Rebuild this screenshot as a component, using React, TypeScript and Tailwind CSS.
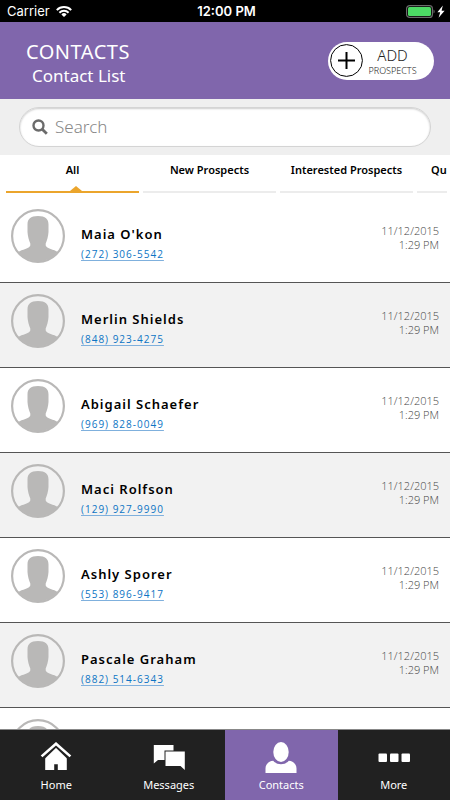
import React from "react";

const contacts = [
  { name: "Maia O'kon", phone: "(272) 306-5542" },
  { name: "Merlin Shields", phone: "(848) 923-4275" },
  { name: "Abigail Schaefer", phone: "(969) 828-0049" },
  { name: "Maci Rolfson", phone: "(129) 927-9990" },
  { name: "Ashly Sporer", phone: "(553) 896-9417" },
  { name: "Pascale Graham", phone: "(882) 514-6343" },
];

const tabs = ["All", "New Prospects", "Interested Prospects"];

function StatusBar() {
  return (
    <div className="grid h-[22px] shrink-0 grid-cols-3 items-center bg-black pr-1 pl-[7px] font-['Inter',sans-serif] text-[13px] leading-[22px] text-white">
      <div className="flex items-center gap-1.5">
        <span>Carrier</span>
        <svg className="h-[11px] w-4" viewBox="0 0 16 11" fill="none" stroke="white" strokeWidth="2" aria-hidden="true">
          <path d="M0.8 4.1a10.2 10.2 0 0 1 14.4 0" />
          <path d="M3.4 6.7a6.5 6.5 0 0 1 9.2 0" />
          <path d="M8 11 5.4 8.4a3.7 3.7 0 0 1 5.2 0z" fill="white" stroke="none" />
        </svg>
      </div>
      <span className="text-center font-semibold">12:00 PM</span>
      <svg className="h-[13px] w-[40px] justify-self-end" viewBox="0 0 40 13" aria-hidden="true">
        <rect x="0.6" y="0.6" width="25.8" height="11.8" rx="3" fill="none" stroke="#6b6b6b" strokeWidth="1.2" />
        <rect x="2" y="2" width="23" height="9" rx="1.5" fill="#4cd964" />
        <path d="M27.5 4.5c1.6.5 1.6 3.5 0 4z" fill="#6b6b6b" />
        <path d="M36.800 0.500 31.400 7.200h2.800l-1.600 5.600L38.600 5.700h-3z" fill="white" />
      </svg>
    </div>
  );
}

function Avatar() {
  return (
    <svg className="size-[54px] shrink-0" viewBox="0 0 54 54" aria-hidden="true">
      <circle cx="27" cy="27" r="25.900" fill="none" stroke="#b9b8b7" strokeWidth="2.200" />
      <path
        d="M27 7C19.500 7 16.500 10 16.500 15.500V23C16.700 27 18 31.500 19.300 34.500V36.500C18.500 39.500 11 40.500 7 43A26 26 0 0 0 47 43C43 40.500 35.500 39.500 34.700 36.500V34.500C36 31.500 37.300 27 37.500 23V15.500C37.500 10 34.500 7 27 7Z"
        fill="#b9b8b7"
      />
    </svg>
  );
}

function ContactRow({ name, phone }: { name: string; phone: string }) {
  return (
    <li className="flex h-[85px] items-start border-b border-[#555] bg-white px-[11px] pt-[11px] even:bg-[#f2f2f2]">
      <Avatar />
      <div className="ml-4 flex-1 pt-[15px]">
        <div className="font-['Noto_Sans',sans-serif] text-[13px] leading-[21px] font-semibold tracking-[1px] text-black">{name}</div>
        <a href={"tel:" + phone} className="block w-fit text-[10px] leading-[19px] tracking-widest text-[#0c74c4] underline decoration-[#7fb0dd] underline-offset-2">
          {phone}
        </a>
      </div>
      <div className="pt-[15px] text-right text-[11px] leading-[14px] font-light text-[#444]">
        <div>11/12/2015</div>
        <div>1:29 PM</div>
      </div>
    </li>
  );
}

function HomeIcon() {
  return (
    <svg className="h-8 w-[32px]" viewBox="0 0 32 32" aria-hidden="true">
      <path d="M16 4 5.200 14V28H14.200V22.300H17.800V28H26.800V14z" fill="white" />
      <path d="M2 17 16 3.600 30 17" fill="none" stroke="#212121" strokeWidth="3.400" />
      <path d="M1.600 14.400 16 1.700 30.400 14.400" fill="none" stroke="white" strokeWidth="2.600" />
    </svg>
  );
}

function MessagesIcon() {
  return (
    <svg className="h-8 w-[32px]" viewBox="0 0 32 32" fill="white" aria-hidden="true">
      <path d="M0.800 3H20.500V8.500H11.500V18H5L0.800 21.500z" />
      <path d="M12.500 9.500H31.800V28L27.500 24H12.500z" />
    </svg>
  );
}

function PersonIcon() {
  return (
    <svg className="h-8 w-[32px]" viewBox="0 0 32 32" fill="white" aria-hidden="true">
      <ellipse cx="16" cy="10" rx="7.700" ry="10" />
      <path d="M8.200 18.800C10 21 13 22.200 16 22.200s6-1.200 7.800-3.400c4.600.4 7.700 3.500 7.700 7.700V31H0.500v-4.500c0-4.200 3.100-7.300 7.700-7.700z" />
    </svg>
  );
}

function MoreIcon() {
  return (
    <svg className="h-8 w-[32px]" viewBox="0 0 32 32" fill="white" aria-hidden="true">
      <rect x="0.500" y="11.500" width="8.500" height="8.500" rx="1" />
      <rect x="12" y="11.500" width="8.500" height="8.500" rx="1" />
      <rect x="23.500" y="11.500" width="8.500" height="8.500" rx="1" />
    </svg>
  );
}

const navItems = [
  { label: "Home", icon: <HomeIcon /> },
  { label: "Messages", icon: <MessagesIcon /> },
  { label: "Contacts", icon: <PersonIcon />, active: true },
  { label: "More", icon: <MoreIcon /> },
];

export default function App() {
  return (
    <div className="flex h-screen flex-col overflow-hidden bg-white font-['Open_Sans',sans-serif]">
      <StatusBar />

      <header className="flex h-[77px] shrink-0 items-center justify-between bg-[#8066ac] pr-4 pl-[26px] text-white">
        <div className="pt-[6px] font-['Noto_Sans',sans-serif]">
          <h1 className="text-[20px] leading-6 tracking-wide">CONTACTS</h1>
          <p className="pl-[6px] text-[17px] leading-6">Contact List</p>
        </div>
        <button type="button" className="flex h-[38px] w-[106px] items-center rounded-full bg-white pl-0.5 text-[#222]">
          <svg className="size-[33px] shrink-0" viewBox="0 0 33 33" fill="none" stroke="black" aria-hidden="true">
            <circle cx="16.500" cy="16.500" r="15.900" strokeWidth="1" />
            <path d="M16.500 8v17M8 16.500h17" strokeWidth="2" />
          </svg>
          <span className="flex flex-1 flex-col items-center pr-3 font-['Noto_Sans',sans-serif] font-light">
            <span className="text-[15px] leading-5">ADD</span>
            <span className="text-[9px] leading-[11px]">PROSPECTS</span>
          </span>
        </button>
      </header>

      <div className="shrink-0 bg-[#efefef] px-[19px] py-2">
        <label className="flex h-10 items-center gap-[7px] rounded-full border border-[#d4d4d4] bg-white px-3 shadow-[inset_0_1px_2px_#ccc]">
          <svg className="size-4 shrink-0" viewBox="0 0 16 16" fill="none" stroke="#6b6b6b" aria-hidden="true">
            <circle cx="6.500" cy="6.500" r="5" strokeWidth="2.400" />
            <path d="m10 10 4.800 4.800" strokeWidth="2.800" />
          </svg>
          <input
            type="search"
            aria-label="Search"
            placeholder="Search"
            className="min-w-0 flex-1 bg-transparent font-['Noto_Sans',sans-serif] text-[17px] leading-6 font-light outline-none placeholder:text-[#888]"
          />
        </label>
      </div>

      <nav className="mr-[3px] flex shrink-0 gap-1 overflow-hidden pb-[5px] pl-[6px] font-['Noto_Sans',sans-serif] text-[11px] leading-4 font-semibold whitespace-nowrap text-black">
        {tabs.map((tab, i) => (
          <button
            key={tab}
            type="button"
            className={
              i === 0
                ? "relative h-[38px] w-[133px] shrink-0 border-b-2 border-[#eba52c] pb-1.5"
                : "h-[38px] w-[133px] shrink-0 border-b-2 border-[#ececec] pb-1.5"
            }
          >
            {tab}
            {i === 0 && (
              <svg className="absolute bottom-0 left-16 h-[5px] w-3" viewBox="0 0 12 5" aria-hidden="true">
                <path d="M0 5 6 0l6 5z" fill="#eba52c" />
              </svg>
            )}
          </button>
        ))}
        <button type="button" className="h-[38px] w-[133px] shrink-0 border-b-2 border-[#ececec] pb-1.5 pl-[14px] text-left">
          Qu
        </button>
      </nav>

      <ul className="min-h-0 flex-1 overflow-hidden">
        {contacts.map((c) => (
          <ContactRow key={c.phone} name={c.name} phone={c.phone} />
        ))}
        <li className="flex h-[85px] px-[11px] pt-[11px]">
          <Avatar />
        </li>
      </ul>

      <nav className="grid h-[71px] shrink-0 grid-cols-4 border-t border-[#888] bg-[#212121] font-['Noto_Sans',sans-serif] text-[11px] leading-4 text-white">
        {navItems.map((item) => (
          <a
            key={item.label}
            href={"#" + item.label}
            className={
              item.active
                ? "flex flex-col items-center gap-[3px] bg-[#8066ac] pt-3"
                : "flex flex-col items-center gap-[3px] pt-3"
            }
          >
            {item.icon}
            <span>{item.label}</span>
          </a>
        ))}
      </nav>
    </div>
  );
}
